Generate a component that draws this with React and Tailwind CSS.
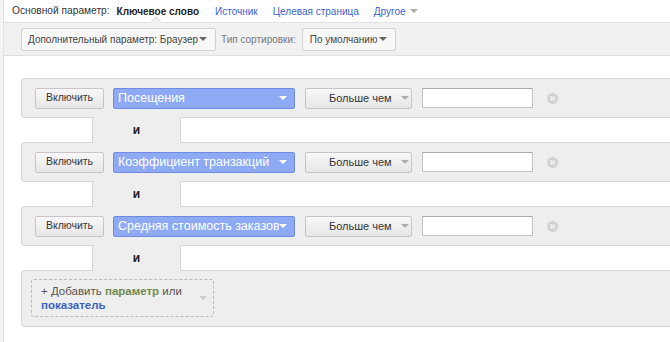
const font = { fontFamily: '"Liberation Sans", Arial, sans-serif' };

function Caret({ className = "border-t-[#666]" }) {
  return (
    <span
      className={`inline-block shrink-0 w-0 h-0 border-l-[4px] border-r-[4px] border-t-[4px] border-l-transparent border-r-transparent ${className}`}
    />
  );
}

function GreyButton({ children, className = "" }) {
  return (
    <div
      className={`flex items-center h-[21px] whitespace-nowrap border border-[#c6c6c6] rounded-[2px] bg-gradient-to-b from-[#f9f9f9] to-[#e6e6e6] text-[10.5px] text-[#333] ${className}`}
    >
      {children}
    </div>
  );
}

function ClearIcon() {
  return (
    <svg width="11" height="11" viewBox="0 0 11 11">
      <circle cx="5.5" cy="5.5" r="5.5" fill="#d2d2d2" />
      <path d="M3.4 3.4 L7.6 7.6 M7.6 3.4 L3.4 7.6" stroke="#f4f4f4" strokeWidth="1.4" />
    </svg>
  );
}

function FilterRow({ label }) {
  return (
    <div className="h-[40px] border border-r-0 border-[#d6d6d6] rounded-l-[4px] bg-[#eeeeee] flex items-center pl-[13px]">
      <GreyButton className="w-[69px] justify-center">Включить</GreyButton>
      <div className="ml-[9px] w-[182px] h-[21px] border border-[#6f8ae0] rounded-[2px] bg-[#8eaaf5] flex items-center pl-[4px] pr-[7px] text-white text-[12.5px] overflow-hidden">
        <span className="flex-1 whitespace-nowrap overflow-hidden">{label}</span>
        <Caret className="border-t-white" />
      </div>
      <GreyButton className="ml-[10px] w-[107px] pl-[23px] gap-[9px]">
        <span className="text-[11px]">Больше чем</span>
        <Caret className="border-t-[#aaa]" />
      </GreyButton>
      <div className="ml-[10px] w-[111px] h-[20px] bg-white border border-[#c4c4c4] border-t-[#a8a8a8]" />
      <div className="ml-[14px] flex items-center">
        <ClearIcon />
      </div>
    </div>
  );
}

function Connector() {
  return (
    <div className="relative z-10 -my-px ml-[71px] w-[89px] h-[26px] bg-[#eeeeee] border-x border-[#d6d6d6] flex items-center justify-center">
      <span className="text-[12px] font-bold text-[#222]">и</span>
    </div>
  );
}

export default function App() {
  return (
    <div className="w-[670px] h-[342px] overflow-hidden bg-white flex" style={font}>
      <div className="w-[4px] bg-[#f4f4f4] border-r border-[#e2e2e2] shrink-0" />
      <div className="flex-1 flex flex-col min-w-0">
        <div className="h-[23px] flex items-center pl-[8px] text-[10px] whitespace-nowrap border-b border-[#e2e2e2]">
          <span className="text-[10.2px] text-[#333]">Основной параметр:</span>
          <span className="ml-[7px] font-bold text-[#222]">Ключевое слово</span>
          <span className="ml-[16px] text-[#3b64d0]">Источник</span>
          <span className="ml-[15px] text-[#3b64d0]">Целевая страница</span>
          <span className="ml-[15px] text-[#3b64d0] flex items-center gap-[4px]">
            Другое <Caret className="border-t-[#aaa]" />
          </span>
        </div>
        <div className="relative h-[33px] bg-[#f1f1f1] border-b border-[#e0e0e0] flex items-center pl-[17px] text-[10px] whitespace-nowrap">
          <span className="absolute left-[148px] -top-[5px] w-[8px] h-[8px] rotate-45 bg-[#f1f1f1] border-t border-l border-[#e2e2e2]" />
          <div className="h-[23px] w-[195px] flex items-center pl-[6px] pr-[8px] border border-[#d2d2d2] rounded-[2px] bg-[#f8f8f8] text-[#444]">
            <span className="flex-1">Дополнительный параметр: Браузер</span>
            <Caret />
          </div>
          <span className="ml-[5px] text-[#777]">Тип сортировки:</span>
          <div className="ml-[6px] h-[23px] w-[94px] flex items-center pl-[7px] pr-[8px] border border-[#d2d2d2] rounded-[2px] bg-[#f8f8f8] text-[#444]">
            <span className="flex-1">По умолчанию</span>
            <Caret />
          </div>
        </div>
        <div className="pt-[22px] pl-[17px] -mr-[20px] flex flex-col">
          <FilterRow label="Посещения" />
          <Connector />
          <FilterRow label="Коэффициент транзакций" />
          <Connector />
          <FilterRow label="Средняя стоимость заказов" />
          <Connector />
          <div className="h-[57px] border border-r-0 border-[#d6d6d6] rounded-l-[4px] bg-[#eeeeee] pl-[9px] pt-[8px]">
            <div className="w-[183px] h-[38px] border border-dashed border-[#b8b8b8] rounded-[3px] flex items-center pl-[9px] pr-[6px]">
              <div className="flex-1 text-[11.5px] leading-[14px]">
                <span className="text-[#555]">+ Добавить </span>
                <span className="text-[#6f8a4f] font-bold">параметр</span>
                <span className="text-[#555]"> или</span>
                <br />
                <span className="text-[#3a62c0] font-bold">показатель</span>
              </div>
              <Caret className="border-t-[#ccc]" />
            </div>
          </div>
        </div>
      </div>
    </div>
  );
}
